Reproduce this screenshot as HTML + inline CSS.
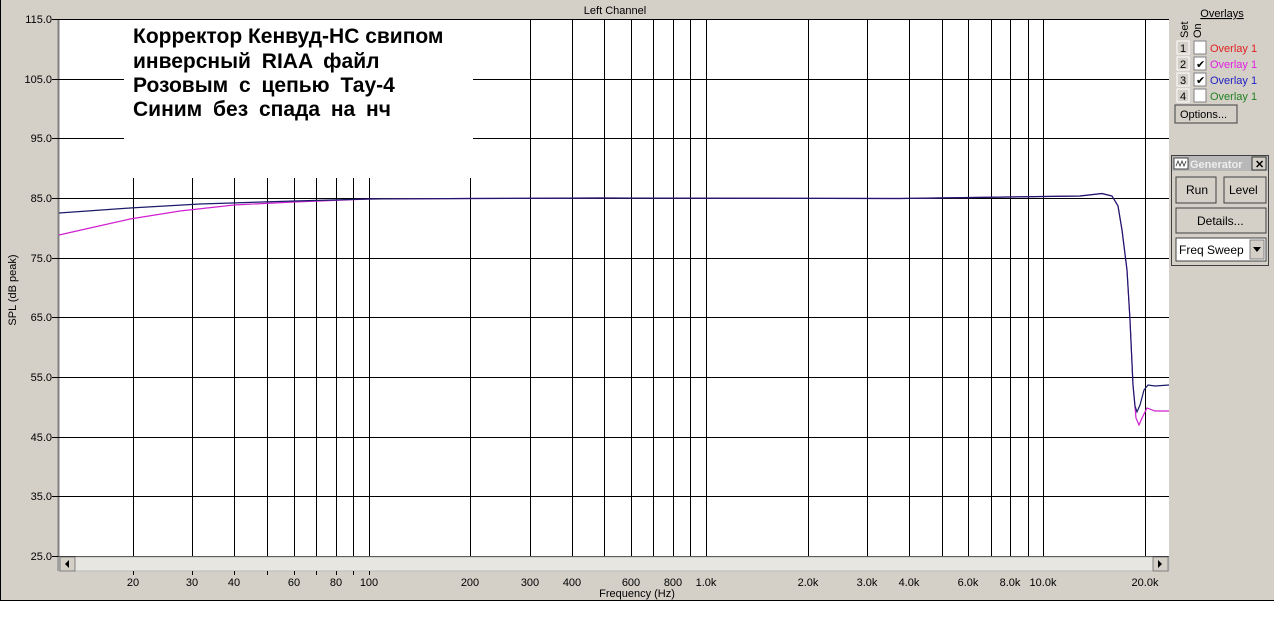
<!DOCTYPE html><html><head><meta charset="utf-8"><style>
body{margin:0;width:1274px;height:637px;background:#fff;overflow:hidden;font-family:"Liberation Sans",sans-serif}
</style></head><body>
<svg width="1274" height="637" xmlns="http://www.w3.org/2000/svg" font-family="Liberation Sans, sans-serif">
<rect x="0" y="0" width="1274" height="601" fill="#d4d0c8"/>
<line x1="0" y1="600.5" x2="1274" y2="600.5" stroke="#000"/>
<line x1="0.5" y1="0" x2="0.5" y2="601" stroke="#000"/>
<text x="615" y="14" font-size="11" text-anchor="middle">Left Channel</text>
<rect x="59" y="19" width="1110" height="537" fill="#fff"/>
<line x1="58.5" y1="19" x2="58.5" y2="571" stroke="#808080" stroke-width="2"/>
<g stroke="#000" stroke-width="1">
<line x1="59" y1="19.5" x2="1169" y2="19.5"/>
<line x1="59" y1="79.5" x2="1169" y2="79.5"/>
<line x1="59" y1="138.5" x2="1169" y2="138.5"/>
<line x1="59" y1="198.5" x2="1169" y2="198.5"/>
<line x1="59" y1="258.5" x2="1169" y2="258.5"/>
<line x1="59" y1="317.5" x2="1169" y2="317.5"/>
<line x1="59" y1="377.5" x2="1169" y2="377.5"/>
<line x1="59" y1="437.5" x2="1169" y2="437.5"/>
<line x1="59" y1="496.5" x2="1169" y2="496.5"/>
<line x1="59" y1="556.5" x2="1169" y2="556.5"/>
<line x1="52" y1="19.5" x2="59" y2="19.5"/><line x1="52" y1="79.5" x2="59" y2="79.5"/><line x1="52" y1="138.5" x2="59" y2="138.5"/><line x1="52" y1="198.5" x2="59" y2="198.5"/><line x1="52" y1="258.5" x2="59" y2="258.5"/><line x1="52" y1="317.5" x2="59" y2="317.5"/><line x1="52" y1="377.5" x2="59" y2="377.5"/><line x1="52" y1="437.5" x2="59" y2="437.5"/><line x1="52" y1="496.5" x2="59" y2="496.5"/><line x1="52" y1="556.5" x2="59" y2="556.5"/>
</g>
<g stroke="#000">
<line x1="133.5" y1="19" x2="133.5" y2="556"/><line x1="192.5" y1="19" x2="192.5" y2="556"/><line x1="234.5" y1="19" x2="234.5" y2="556"/><line x1="267.5" y1="19" x2="267.5" y2="556"/><line x1="294.5" y1="19" x2="294.5" y2="556"/><line x1="316.5" y1="19" x2="316.5" y2="556"/><line x1="336.5" y1="19" x2="336.5" y2="556"/><line x1="353.5" y1="19" x2="353.5" y2="556"/><line x1="369.5" y1="19" x2="369.5" y2="556"/>
<line x1="470.5" y1="19" x2="470.5" y2="556"/><line x1="530.5" y1="19" x2="530.5" y2="556"/><line x1="572.5" y1="19" x2="572.5" y2="556"/><line x1="604.5" y1="19" x2="604.5" y2="556"/><line x1="631.5" y1="19" x2="631.5" y2="556"/><line x1="653.5" y1="19" x2="653.5" y2="556"/><line x1="673.5" y1="19" x2="673.5" y2="556"/><line x1="690.5" y1="19" x2="690.5" y2="556"/><line x1="706.5" y1="19" x2="706.5" y2="556"/>
<line x1="808.5" y1="19" x2="808.5" y2="556"/><line x1="867.5" y1="19" x2="867.5" y2="556"/><line x1="909.5" y1="19" x2="909.5" y2="556"/><line x1="942.5" y1="19" x2="942.5" y2="556"/><line x1="968.5" y1="19" x2="968.5" y2="556"/><line x1="991.5" y1="19" x2="991.5" y2="556"/><line x1="1010.5" y1="19" x2="1010.5" y2="556"/><line x1="1028.5" y1="19" x2="1028.5" y2="556"/><line x1="1043.5" y1="19" x2="1043.5" y2="556"/>
<line x1="1145.5" y1="19" x2="1145.5" y2="556"/>
</g>
<rect x="124" y="20" width="349" height="158" fill="#fff"/>
<g font-size="21" font-weight="bold" word-spacing="5">
<text x="133" y="43" word-spacing="0">Корректор Кенвуд-НС свипом</text>
<text x="133" y="68">инверсный RIAA  файл</text>
<text x="133" y="92">Розовым  с цепью  Тау-4</text>
<text x="133" y="116">Синим  без  спада  на нч</text>
</g>
<polyline fill="none" stroke="#d020d0" stroke-width="1.2" points="59,235 90,228 130,219 180,211 234,205 294,202 369,199 470,198.5 600,198 900,198.5 1080,196 1102,193.5 1112,196 1118,206 1122,230 1127,270 1130,320 1133,385 1136,418 1139,425 1142,418 1147,408 1155,411 1169,411"/>
<polyline fill="none" stroke="#1a1a6a" stroke-width="1.2" points="59,213 130,208 200,204 294,201 369,199 470,198.5 600,198 900,198.5 1080,196 1102,193.5 1112,196 1118,206 1122,230 1127,270 1130,320 1133,385 1135,406 1137,412 1140,405 1144,390 1148,385 1155,386 1169,385"/>
<g font-size="11" text-anchor="end">
<text x="52" y="23">115.0</text><text x="52" y="83">105.0</text><text x="52" y="142">95.0</text><text x="52" y="202">85.0</text><text x="52" y="262">75.0</text><text x="52" y="321">65.0</text><text x="52" y="381">55.0</text><text x="52" y="441">45.0</text><text x="52" y="500">35.0</text><text x="52" y="560">25.0</text>
</g>
<text x="16" y="290" font-size="11" transform="rotate(-90 16 290)" text-anchor="middle">SPL (dB peak)</text>
<rect x="59" y="557" width="1110" height="14" fill="#e8e6e0"/>
<rect x="59" y="557" width="1110" height="14" fill="none" stroke="#bbb"/>
<rect x="60" y="557" width="15" height="14" fill="#d4d0c8" stroke="#808080"/>
<path d="M69,560 L65,564 L69,568Z" fill="#000"/>
<rect x="1153" y="557" width="15" height="14" fill="#d4d0c8" stroke="#808080"/>
<path d="M1158,560 L1162,564 L1158,568Z" fill="#000"/>
<g stroke="#000"><line x1="133.5" y1="571" x2="133.5" y2="575"/><line x1="192.5" y1="571" x2="192.5" y2="575"/><line x1="234.5" y1="571" x2="234.5" y2="575"/><line x1="267.5" y1="571" x2="267.5" y2="575"/><line x1="294.5" y1="571" x2="294.5" y2="575"/><line x1="316.5" y1="571" x2="316.5" y2="575"/><line x1="336.5" y1="571" x2="336.5" y2="575"/><line x1="353.5" y1="571" x2="353.5" y2="575"/><line x1="369.5" y1="571" x2="369.5" y2="575"/></g>
<g font-size="11" text-anchor="middle">
<text x="133" y="586">20</text><text x="192" y="586">30</text><text x="234" y="586">40</text><text x="294" y="586">60</text><text x="336" y="586">80</text><text x="369" y="586">100</text>
<text x="470" y="586">200</text><text x="530" y="586">300</text><text x="572" y="586">400</text><text x="631" y="586">600</text><text x="673" y="586">800</text><text x="706" y="586">1.0k</text>
<text x="808" y="586">2.0k</text><text x="867" y="586">3.0k</text><text x="909" y="586">4.0k</text><text x="968" y="586">6.0k</text><text x="1010" y="586">8.0k</text><text x="1043" y="586">10.0k</text><text x="1145" y="586">20.0k</text>
<text x="637" y="597">Frequency (Hz)</text>
</g>
<text x="1222" y="17" font-size="11" text-anchor="middle" text-decoration="underline">Overlays</text>
<text x="1188" y="38" font-size="11" transform="rotate(-90 1188 38)">Set</text>
<text x="1201" y="38" font-size="11" transform="rotate(-90 1201 38)">On</text>
<g font-size="11">
<rect x="1177" y="41" width="12" height="13" fill="#d4d0c8" stroke="#fff"/><text x="1180" y="52">1</text>
<rect x="1194" y="41" width="12" height="13" fill="#fff" stroke="#808080"/><text x="1210" y="52" fill="#e02020">Overlay 1</text>
<rect x="1177" y="57" width="12" height="13" fill="#d4d0c8" stroke="#fff"/><text x="1180" y="68">2</text>
<rect x="1194" y="57" width="12" height="13" fill="#fff" stroke="#808080"/><text x="1196" y="68">✔</text><text x="1210" y="68" fill="#e020e0">Overlay 1</text>
<rect x="1177" y="73" width="12" height="13" fill="#d4d0c8" stroke="#fff"/><text x="1180" y="84">3</text>
<rect x="1194" y="73" width="12" height="13" fill="#fff" stroke="#808080"/><text x="1196" y="84">✔</text><text x="1210" y="84" fill="#2020c0">Overlay 1</text>
<rect x="1177" y="89" width="12" height="13" fill="#d4d0c8" stroke="#fff"/><text x="1180" y="100">4</text>
<rect x="1194" y="89" width="12" height="13" fill="#fff" stroke="#808080"/><text x="1210" y="100" fill="#208020">Overlay 1</text>
<rect x="1175" y="105" width="62" height="18" fill="#d4d0c8" stroke="#404040"/><text x="1180" y="118">Options...</text>
<rect x="1171.5" y="155.5" width="97" height="110" fill="#d4d0c8" stroke="#404040"/>
<rect x="1172" y="156" width="96" height="15" fill="#b8b8b8"/>
<rect x="1174" y="158" width="14" height="11" fill="#fff" stroke="#444"/>
<path d="M1176,166 L1178,161 L1180,166 L1182,161 L1184,166 L1186,161" fill="none" stroke="#333" stroke-width="0.8"/>
<text x="1190" y="168" fill="#eee" font-weight="bold">Generator</text>
<rect x="1252" y="157" width="14" height="13" fill="#d4d0c8" stroke="#333"/><text x="1255" y="168" font-weight="bold">✕</text>
<rect x="1176" y="177" width="40" height="26" fill="#d4d0c8" stroke="#404040"/><text x="1186" y="194" font-size="12">Run</text>
<rect x="1224" y="177" width="42" height="26" fill="#d4d0c8" stroke="#404040"/><text x="1229" y="194" font-size="12">Level</text>
<rect x="1176" y="208" width="90" height="25" fill="#d4d0c8" stroke="#404040"/><text x="1197" y="225" font-size="12">Details...</text>
<rect x="1176" y="238" width="90" height="23" fill="#fff" stroke="#404040"/><text x="1179" y="254" font-size="12">Freq Sweep</text>
<rect x="1250" y="240" width="14" height="19" fill="#d4d0c8" stroke="#808080"/><path d="M1253,247 L1261,247 L1257,252Z" fill="#000"/>
</g>
</svg>
</body></html>
